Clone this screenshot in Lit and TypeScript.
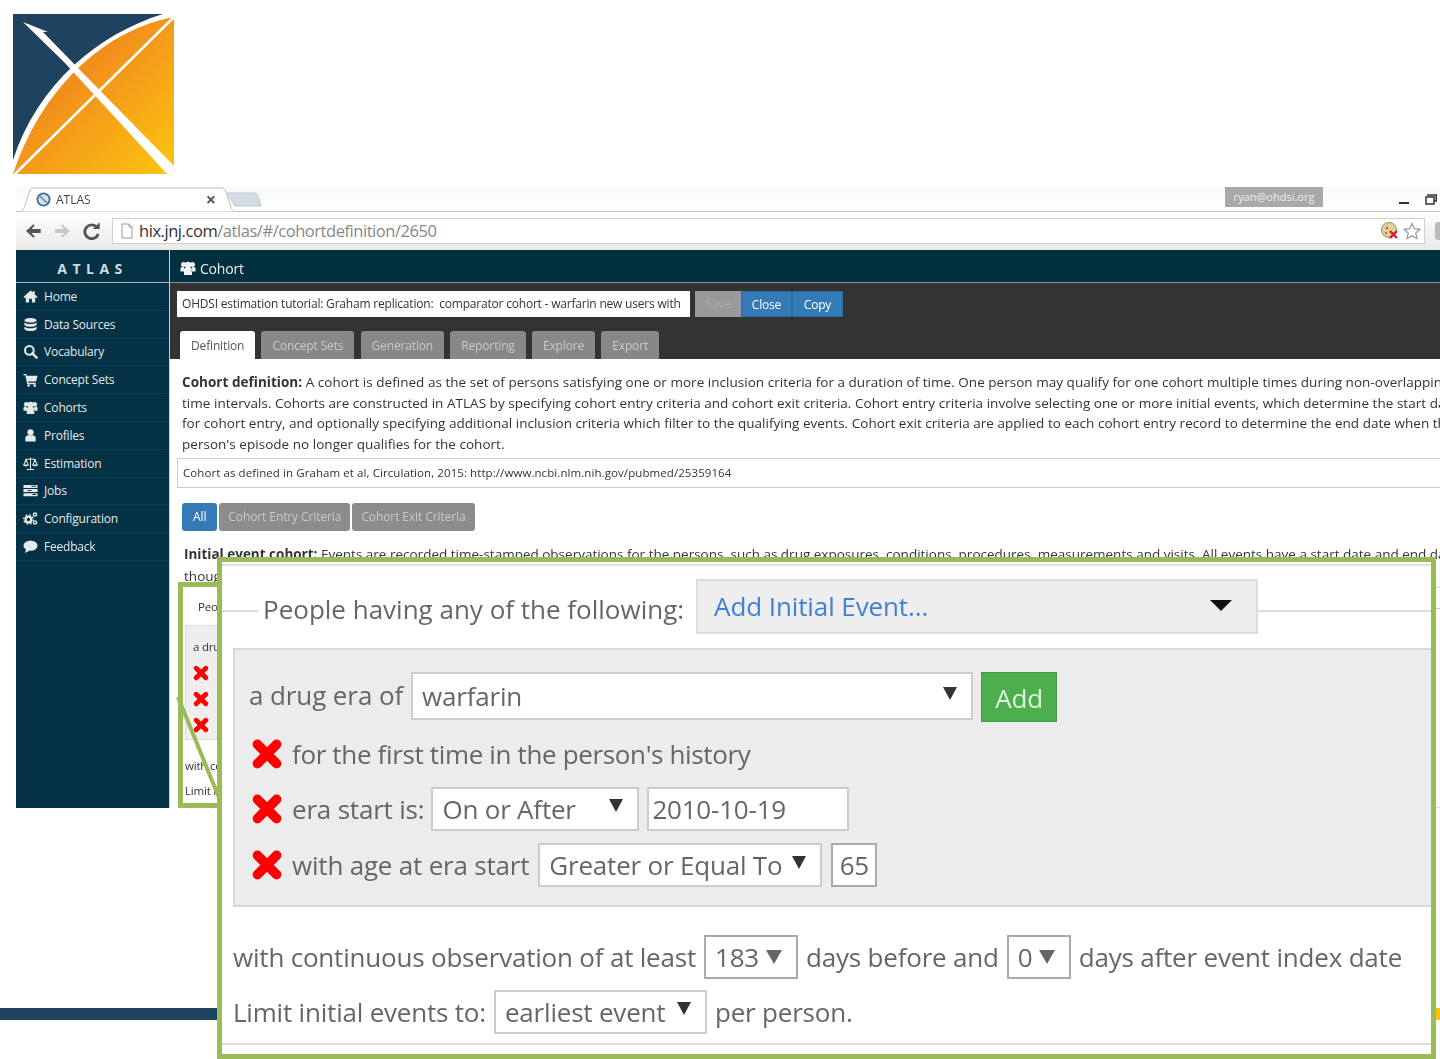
import { css, html, svg, LitElement } from "lit";
import { customElement } from "lit/decorators.js";

const icons = {
    home: svg`<path d="M8 1.500.5 8.500l1.300 1.300L3 8.700v5.800h3.500v-4h3v4H13V8.700l1.200 1.100 1.300-1.300-3-2.800V2.500h-2v1z"/>`,
    db: svg`<path d="M1.500 3.500C1.500 2 5 1 8 1s6.500 1 6.500 2.500S11 6 8 6 1.500 5 1.500 3.500zM1.500 5.500C3 7 5.500 7.500 8 7.500s5-.5 6.500-2V8c0 1.500-3.500 2.500-6.500 2.500S1.500 9.500 1.500 8zM1.500 10C3 11.500 5.500 12 8 12s5-.5 6.500-2v2.500C14.500 14 11 15 8 15s-6.500-1-6.500-2.500z"/>`,
    search: svg`<circle cx="6.800" cy="6.800" r="4.600" fill="none" stroke="currentColor" stroke-width="2.200"/><path d="m10 10 4.500 4.500" stroke="currentColor" stroke-width="2.600" stroke-linecap="round"/>`,
    cart: svg`<path d="M.5 2H3.500l.5 2h11.500l-1.500 6H5.500l.3 1.500H13.500V13H4.500L2.500 3.500H.5z"/><circle cx="6" cy="14.500" r="1.400"/><circle cx="12.500" cy="14.500" r="1.400"/>`,
    users: svg`<circle cx="3.500" cy="4.500" r="2.500"/><circle cx="12.500" cy="4.500" r="2.500"/><circle cx="8" cy="5" r="3.200"/><path d="M.5 11.500V8.500C.5 7.500 1.500 7 3 7l1 .5.5 4zM15.500 11.500V8.500C15.500 7.500 14.500 7 13 7l-1 .5-.5 4zM4 15V10c0-1.500 1-2.500 2-2.500h4c1 0 2 1 2 2.500v5z"/>`,
    user: svg`<circle cx="8" cy="4.500" r="3.300"/><path d="M2.500 14.500V11c0-2 1.500-3.200 3-3.200h5c1.500 0 3 1.200 3 3.200v3.500z"/>`,
    scale: svg`<path d="M8 1.500V14M4 14.500h8M2.500 3.500h11M3.200 4 .8 9.500h4.800zM12.800 4l-2.400 5.500h4.800z" fill="none" stroke="currentColor" stroke-width="1.100"/><path d="M.8 9.500c.5 2 4.300 2 4.800 0zM10.400 9.500c.5 2 4.300 2 4.800 0z"/>`,
    jobs: svg`<path d="M.5 2h15v3.200H.5zM.5 6.400h15v3.200H.5zM.5 10.800h15V14H.5z"/><path d="M9 3h5v1H9zM5 7.500h4v1H5zM10 11.800h4v1h-4z" fill="#053144"/>`,
    cogs: svg`<circle cx="5.800" cy="9" r="3" fill="none" stroke="currentColor" stroke-width="2.400"/><circle cx="5.800" cy="9" r="5" fill="none" stroke="currentColor" stroke-width="1.400" stroke-dasharray="2 1.930"/><circle cx="12.800" cy="3.800" r="1.700" fill="none" stroke="currentColor" stroke-width="1.500"/><circle cx="12.800" cy="12.200" r="1.700" fill="none" stroke="currentColor" stroke-width="1.500"/>`,
    comment: svg`<ellipse cx="8" cy="7" rx="7.500" ry="5.500"/><path d="M3.500 10.500 2 15l5-2.500z"/>`,
};

const menu: [keyof typeof icons, string][] = [
    ["home", "Home"],
    ["db", "Data Sources"],
    ["search", "Vocabulary"],
    ["cart", "Concept Sets"],
    ["users", "Cohorts"],
    ["user", "Profiles"],
    ["scale", "Estimation"],
    ["jobs", "Jobs"],
    ["cogs", "Configuration"],
    ["comment", "Feedback"],
];

const tabs = ["Concept Sets", "Generation", "Reporting", "Explore", "Export"];

const icon = (name: keyof typeof icons) =>
    html`<svg class="icon" viewBox="0 0 16 16" fill="currentColor">${icons[name]}</svg>`;

const cross = (cls: string) =>
    html`<svg class=${cls} viewBox="0 0 30 30"><path d="M6 6 24 24M24 6 6 24" stroke="#f00" stroke-width="9" stroke-linecap="round"/></svg>`;

@customElement("app-root")
export class AppRoot extends LitElement {

    static styles = css`
        :host {
            display: block;
            position: relative;
            width: 1440px;
            height: 1059px;
            overflow: hidden;
            background: #fff;
            font-family: "Open Sans", "Noto Sans", sans-serif;
            color: #333;
        }

        .logo {
            display: block;
            width: 163px;
            height: 162px;
            margin: 14px 0 0 13px;
        }

        .window {
            margin: 11px 0 0 16px;
            filter: blur(0.35px);
        }

        /* browser chrome */
        .tabstrip {
            position: relative;
            display: flex;
            height: 25px;
            background: linear-gradient(#fafafa, #fff);
            border-bottom: 1px solid #c4c4c4;
            box-sizing: border-box;
        }

        .tabshape {
            position: absolute;
            left: 0;
            top: 0;
            width: 250px;
            height: 25px;
        }

        .tabtitle {
            position: relative;
            display: flex;
            align-items: center;
            width: 204px;
            height: 24px;
            padding-left: 20px;
            box-sizing: border-box;
            font-size: 12px;
            color: #444;
        }

        .favicon {
            width: 15px;
            height: 15px;
            margin-right: 5px;
        }

        .tabclose {
            margin-left: auto;
            margin-right: 4px;
            font-size: 18px;
            font-weight: 700;
            color: #555;
        }

        .account {
            margin-left: auto;
            width: 98px;
            height: 20px;
            line-height: 19px;
            text-align: center;
            background: #a9a9a9;
            color: #eee;
            font-size: 11px;
        }

        .winbtns {
            display: flex;
            align-items: center;
            gap: 16px;
            margin: 0 3px 0 76px;
        }

        .min {
            width: 10px;
            height: 2px;
            margin-top: 7px;
            background: #333;
        }

        .max {
            width: 12px;
            height: 11px;
        }

        .toolbar {
            display: flex;
            align-items: center;
            height: 38px;
            padding-left: 8px;
            background: linear-gradient(#fff, #e9e9e9);
        }

        .nav {
            width: 18px;
            height: 18px;
            margin-right: 12px;
        }

        .omnibox {
            display: flex;
            align-items: center;
            flex: none;
            width: 1313px;
            height: 26px;
            margin-left: -1px;
            padding: 0 3px 1px 7px;
            box-sizing: border-box;
            background: #fff;
            border: 1px solid #cfcfcf;
            font-size: 16.500px;
            letter-spacing: -0.45px;
            color: #888;
        }

        .omnibox b {
            font-weight: 400;
            color: #333;
        }

        .doc {
            width: 14px;
            height: 16px;
            margin-right: 5px;
        }

        .omni-right {
            margin-left: auto;
            display: flex;
            align-items: center;
            gap: 4px;
        }

        .omni-right svg {
            width: 18px;
            height: 18px;
        }

        .ext {
            flex: none;
            width: 5px;
            height: 18px;
            margin-left: 10px;
            border-radius: 3px 0 0 3px;
            background: #bbb;
        }

        /* ATLAS app */
        .app {
            display: flex;
            height: 558px;
            overflow: hidden;
        }

        .side {
            flex: none;
            width: 153px;
            background: #053144;
            border-right: 1px solid #c8d0d4;
            color: #e4eaec;
            font-size: 12px;
        }

        .brand {
            height: 33px;
            line-height: 38px;
            box-sizing: border-box;
            text-align: center;
            font-size: 14px;
            font-weight: 700;
            letter-spacing: 5.500px;
            color: #d3dbde;
            border-bottom: 1px solid #a8b5bb;
        }

        .item {
            display: flex;
            align-items: center;
            height: 27.800px;
            padding-left: 7px;
            box-sizing: border-box;
            border-bottom: 1px solid #0c3e52;
            letter-spacing: -0.2px;
        }

        .icon {
            flex: none;
            width: 15px;
            height: 15px;
            margin-right: 6px;
        }

        .main {
            flex: 1;
            min-width: 0;
        }

        .head {
            display: flex;
            align-items: center;
            height: 33px;
            padding: 4px 0 0 10px;
            box-sizing: border-box;
            background: #02303f;
            border-bottom: 1px solid #7b96a0;
            color: #eef2f3;
            font-size: 14px;
            letter-spacing: -0.2px;
        }

        .head .icon {
            width: 16px;
            height: 16px;
            margin-right: 4px;
        }

        .bar {
            height: 76px;
            padding: 8px 0 0 7px;
            box-sizing: border-box;
            background: #333;
            font-size: 12px;
        }

        .names {
            display: flex;
            align-items: center;
        }

        .name {
            width: 513px;
            height: 26px;
            line-height: 26px;
            padding-left: 5px;
            box-sizing: border-box;
            margin-right: 5px;
            background: #fff;
            white-space: nowrap;
            overflow: hidden;
            letter-spacing: -0.2px;
        }

        .btn {
            height: 26px;
            line-height: 26px;
            text-align: center;
            color: #fff;
            letter-spacing: -0.2px;
        }

        .save {
            width: 46px;
            background: #999;
            color: #aaa;
        }

        .blue {
            width: 51px;
            background: #337ab7;
            border: 1px solid #2e6da4;
            box-sizing: border-box;
        }

        .tabs {
            display: flex;
            gap: 6.200px;
            margin: 14px 0 0 3px;
        }

        .tab {
            height: 28px;
            line-height: 29px;
            padding: 0 11px;
            border-radius: 3px 3px 0 0;
            background: #888;
            color: #c9c9c9;
            letter-spacing: -0.15px;
        }

        .tab.on {
            background: #fff;
            color: #555;
        }

        .body {
            padding: 13px 0 0 12px;
            font-size: 13.500px;
            line-height: 20.500px;
            white-space: nowrap;
            letter-spacing: 0.03px;
        }

        .note {
            height: 30px;
            line-height: 28px;
            margin: 4px 0 15px -5px;
            padding-left: 5px;
            box-sizing: border-box;
            border: 1px solid #ccc;
            border-right: 0;
            font-size: 11.500px;
            letter-spacing: 0.08px;
        }

        .filters {
            display: flex;
            gap: 2px;
            font-size: 12px;
        }

        .filter {
            height: 28px;
            line-height: 28px;
            padding: 0 9px;
            border-radius: 3px;
            background: #8c8c8c;
            color: #c9c9c9;
            letter-spacing: -0.1px;
        }

        .filter.on {
            background: #337ab7;
            color: #fff;
            padding: 0 11px;
        }

        .initial {
            margin: 13px 0 0 2px;
            letter-spacing: 0;
        }

        .initial-2 {
            margin: 1px 0 0 2px;
        }

        .mini {
            font-size: 11.500px;
            letter-spacing: -0.2px;
        }

        .mini-legend {
            height: 20px;
            margin: 11px 0 0 16px;
        }

        .mini-box {
            width: 1100px;
            height: 115px;
            margin: 8px 0 0 3px;
            padding: 13px 0 0 7px;
            box-sizing: border-box;
            line-height: 15.500px;
            background: #eee;
            border: 1px solid #ddd;
        }

        .mini-x {
            display: block;
            width: 16px;
            height: 16px;
            margin-top: 10px;
        }

        .mini-foot {
            margin: 13px 0 0 3px;
            line-height: 25px;
        }

        .strip {
            display: flex;
            height: 12px;
            margin-top: 200px;
        }

        .strip-navy {
            flex: 1;
            background: #1f4260;
        }

        .strip-gold {
            width: 8px;
            background: #fdc010;
        }

        /* zoom callout, it lies over the screenshot */
        .edge {
            position: absolute;
            left: 1436px;
            top: 587px;
            width: 4px;
            height: 221px;
            box-sizing: border-box;
            border-top: 1px solid #ddd;
            border-bottom: 1px solid #ddd;
        }

        .edge div {
            height: 1px;
            margin-top: 20px;
            background: #ccc;
        }

        .frame-small {
            position: absolute;
            left: 178px;
            top: 582px;
            width: 1200px;
            height: 226px;
            box-sizing: border-box;
            border: 5px solid #9bbb59;
        }

        .link {
            position: absolute;
            left: 176px;
            top: 694px;
            width: 50px;
            height: 114px;
        }

        .zoom {
            position: absolute;
            left: 217px;
            top: 557px;
            width: 1219px;
            height: 502px;
            box-sizing: border-box;
            padding-top: 2px;
            border: 5px solid #9bbb59;
            background: #fff;
            font-size: 26px;
            color: #666;
            white-space: nowrap;
            letter-spacing: -0.2px;
        }

        .zoom-inner {
            height: 481px;
            border-top: 2px solid #e2e2e2;
            border-bottom: 2px solid #ddd;
            box-sizing: border-box;
            filter: blur(0.45px);
        }

        .legend {
            display: flex;
            align-items: center;
            height: 55px;
            margin-top: 13px;
        }

        .legend-text {
            padding-top: 4px;
            letter-spacing: 0;
        }

        .rule {
            height: 2px;
            margin-top: 8px;
            background: #ddd;
        }

        .rule-left {
            width: 37px;
            margin-right: 4px;
        }

        .rule-right {
            flex: 1;
        }

        .adder {
            display: flex;
            align-items: center;
            justify-content: space-between;
            width: 562px;
            height: 55px;
            margin-left: 12px;
            padding: 0 24px 2px 16px;
            box-sizing: border-box;
            background: #eee;
            border: 2px solid #ddd;
            color: #3f7fd6;
            letter-spacing: -0.1px;
        }

        .adder i {
            width: 0;
            height: 0;
            border: 11px solid transparent;
            border-top: 11px solid #111;
            border-bottom: 0;
        }

        .group {
            display: flex;
            flex-direction: column;
            gap: 12px;
            height: 259px;
            margin: 14px 0 0 11px;
            padding: 22px 0 0 14px;
            box-sizing: border-box;
            background: #ececec;
            border-top: 2px solid #d8d8d8;
            border-bottom: 2px solid #d8d8d8;
            border-left: 2px solid #d8d8d8;
        }

        .row {
            display: flex;
            align-items: center;
        }

        .row-drug {
            height: 50px;
        }

        .drug-label {
            padding-bottom: 4px;
            letter-spacing: -0.1px;
        }

        .row-first {
            height: 40px;
            letter-spacing: -0.35px;
        }

        .row-start {
            height: 45px;
        }

        .row-age {
            height: 44px;
        }

        .x {
            flex: none;
            width: 32px;
            height: 32px;
            margin: 0 9px 0 2px;
        }

        .field {
            display: flex;
            align-items: center;
            justify-content: space-between;
            height: 44px;
            padding: 0 14px 0 9px;
            box-sizing: border-box;
            background: #fff;
            border: 2px solid #ccc;
            color: #666;
        }

        .field i {
            flex: none;
            width: 0;
            height: 0;
            margin-bottom: 6px;
            border: 7px solid transparent;
            border-top: 13px solid #333;
            border-bottom: 0;
        }

        .drug {
            width: 562px;
            height: 48px;
            margin: 0 0 2px 8px;
        }

        .add {
            width: 76px;
            height: 50px;
            line-height: 50px;
            margin-left: 8px;
            text-align: center;
            background: #4cae4c;
            border: 1px solid #449d44;
            box-sizing: border-box;
            color: #dff3df;
        }

        .op {
            width: 208px;
            margin-left: 7px;
        }

        .date {
            width: 202px;
            margin-left: 8px;
            padding: 0 3px;
        }

        .gte {
            width: 284px;
            margin-left: 9px;
        }

        .num {
            width: 46px;
            margin-left: 9px;
            border-color: #aaa;
            justify-content: center;
            padding: 0;
        }

        .line {
            display: flex;
            align-items: center;
            height: 44px;
            margin-left: 11px;
        }

        .line-obs {
            margin-top: 28px;
        }

        .line-limit {
            margin-top: 10px;
            height: 45px;
        }

        .line .field {
            margin: 0 8px;
        }

        .line .field i {
            margin-bottom: 0;
            border-width: 14px 8px 0;
            border-style: solid;
            border-color: #666 transparent transparent;
        }

        .line .field.earliest i {
            border-width: 13px 7px 0;
            border-color: #333 transparent transparent;
            margin-bottom: 6px;
        }

        .before {
            width: 94px;
            border-color: #aaa;
        }

        .after {
            width: 64px;
            border-color: #aaa;
        }

        .earliest {
            width: 213px;
        }
    `;

    protected render() {
        return html`
            <svg class="logo" viewBox="0 0 163 162">
                <defs>
                    <linearGradient id="gold" x1="0.2" y1="0.2" x2="1" y2="1">
                        <stop offset="0.25" stop-color="#f28f1c"/>
                        <stop offset="1" stop-color="#fcc60f"/>
                    </linearGradient>
                </defs>
                <path d="M0 0H150C85 20 25 70 0 146Z" fill="#1f4260"/>
                <path d="M161 3C95 15 30 70 0 160H161Z" fill="url(#gold)"/>
                <path d="M161 3 2 160" stroke="#fff" stroke-width="2.500"/>
                <path d="M10 8 35 18 30 18 65 54 162 153V161H155L52 49Z" fill="#fff"/>
            </svg>

            <div class="window">
                <div class="tabstrip">
                    <svg class="tabshape" viewBox="0 0 250 25">
                        <path d="M0 25C8 25 8 22 11 12L14 3C15 1 16 1 18 1H205C208 1 209 2 210 5L215 20C216 24 218 25 222 25Z" fill="#fff" stroke="#bdbdbd"/>
                        <path d="M211 6H238C241 6 242 8 243 12L245 19H219Z" fill="#d3dbe4" stroke="#c4c9cf"/>
                    </svg>
                    <div class="tabtitle">
                        <svg class="favicon" viewBox="0 0 16 16">
                            <circle cx="8" cy="8" r="6.500" fill="#d7e3ee" stroke="#41719c" stroke-width="2"/>
                            <path d="M4 4 12 12" stroke="#7d9cb8" stroke-width="2"/>
                        </svg>
                        ATLAS
                        <span class="tabclose">×</span>
                    </div>
                    <div class="account">ryan@ohdsi.org</div>
                    <div class="winbtns">
                        <div class="min"></div>
                        <svg class="max" viewBox="0 0 12 11" fill="none" stroke="#333" stroke-width="1.500">
                            <path d="M3 2V1H11.250V7H9"/><path d="M1 3H9V10H1Z"/>
                        </svg>
                    </div>
                </div>
                <div class="toolbar">
                    <svg class="nav" viewBox="0 0 18 18"><path d="M17 7H7.500L11 3.500 9.500 2 2 9l7.500 7 1.500-1.500L7.500 11H17Z" fill="#555"/></svg>
                    <svg class="nav" viewBox="0 0 18 18"><path d="M1 7H10.500L7 3.500 8.500 2 16 9l-7.500 7L7 14.500 10.500 11H1Z" fill="#c6c6c6"/></svg>
                    <svg class="nav" viewBox="0 0 18 18"><path d="M14 5A7 7 0 1 0 15.500 12" fill="none" stroke="#555" stroke-width="3"/><path d="M10 7H17V0Z" fill="#555"/></svg>
                    <div class="omnibox">
                        <svg class="doc" viewBox="0 0 14 16"><path d="M2 1H9L12 4V15H2Z" fill="#fff" stroke="#999"/><path d="M9 1V4H12" fill="none" stroke="#999"/></svg>
                        <span><b>hix.jnj.com</b>/atlas/#/cohortdefinition/2650</span>
                        <div class="omni-right">
                            <svg viewBox="0 0 18 18">
                                <circle cx="8" cy="8" r="7.500" fill="#e4cf9c" stroke="#a88d55"/>
                                <circle cx="6" cy="6" r="1.200" fill="#8a6d3b"/><circle cx="5" cy="11" r="1" fill="#8a6d3b"/>
                                <path d="M9 9 16 16M16 9 9 16" stroke="#d3202a" stroke-width="2.400"/>
                            </svg>
                            <svg viewBox="0 0 18 18"><path d="M9 1.500 11.300 6.700 17 7.300 12.700 11 14 16.500 9 13.700 4 16.500 5.300 11 1 7.300 6.700 6.700Z" fill="#fff" stroke="#999" stroke-width="1.200"/></svg>
                        </div>
                    </div>
                    <div class="ext"></div>
                </div>
                <div class="app">
                    <nav class="side">
                        <div class="brand">ATLAS</div>
                        ${menu.map(([name, label]) => html`<div class="item">${icon(name)}${label}</div>`)}
                    </nav>
                    <div class="main">
                        <div class="head">${icon("users")}Cohort</div>
                        <div class="bar">
                            <div class="names">
                                <div class="name">OHDSI estimation tutorial: Graham replication:&nbsp; comparator cohort - warfarin new users with</div>
                                <div class="btn save">Save</div>
                                <div class="btn blue">Close</div>
                                <div class="btn blue">Copy</div>
                            </div>
                            <div class="tabs">
                                <div class="tab on">Definition</div>
                                ${tabs.map((t) => html`<div class="tab">${t}</div>`)}
                            </div>
                        </div>
                        <div class="body">
                            <div><b>Cohort definition:</b> A cohort is defined as the set of persons satisfying one or more inclusion criteria for a duration of time. One person may qualify for one cohort multiple times during non-overlapping</div>
                            <div>time intervals. Cohorts are constructed in ATLAS by specifying cohort entry criteria and cohort exit criteria. Cohort entry criteria involve selecting one or more initial events, which determine the start date</div>
                            <div>for cohort entry, and optionally specifying additional inclusion criteria which filter to the qualifying events. Cohort exit criteria are applied to each cohort entry record to determine the end date when the</div>
                            <div>person's episode no longer qualifies for the cohort.</div>
                            <div class="note">Cohort as defined in Graham et al, Circulation, 2015: http://www.ncbi.nlm.nih.gov/pubmed/25359164</div>
                            <div class="filters">
                                <div class="filter on">All</div>
                                <div class="filter">Cohort Entry Criteria</div>
                                <div class="filter">Cohort Exit Criteria</div>
                            </div>
                            <div class="initial"><b>Initial event cohort:</b> Events are recorded time-stamped observations for the persons, such as drug exposures, conditions, procedures, measurements and visits. All events have a start date and end date,</div>
                            <div class="initial-2">though</div>
                            <div class="mini">
                                <div class="mini-legend">People</div>
                                <div class="mini-box">
                                    a drug
                                    ${cross("mini-x")}${cross("mini-x")}${cross("mini-x")}
                                </div>
                                <div class="mini-foot">with continuous<br>Limit initial</div>
                            </div>
                        </div>
                    </div>
                </div>
            </div>

            <div class="strip"><div class="strip-navy"></div><div class="strip-gold"></div></div>

            <div class="edge"><div></div></div>
            <div class="frame-small"></div>
            <svg class="link" viewBox="0 0 50 114"><path d="M2 3 46 111" stroke="#9bbb59" stroke-width="4"/></svg>

            <div class="zoom">
                <div class="zoom-inner">
                    <div class="legend">
                        <div class="rule rule-left"></div>
                        <span class="legend-text">People having any of the following:</span>
                        <div class="adder">Add Initial Event...<i></i></div>
                        <div class="rule rule-right"></div>
                    </div>
                    <div class="group">
                        <div class="row row-drug">
                            <span class="drug-label">a drug era of</span>
                            <div class="field drug">warfarin<i></i></div>
                            <div class="add">Add</div>
                        </div>
                        <div class="row row-first">${cross("x")}for the first time in the person's history</div>
                        <div class="row row-start">
                            ${cross("x")}era start is:
                            <div class="field op">On or After<i></i></div>
                            <div class="field date">2010-10-19</div>
                        </div>
                        <div class="row row-age">
                            ${cross("x")}with age at era start
                            <div class="field gte">Greater or Equal To<i></i></div>
                            <div class="field num">65</div>
                        </div>
                    </div>
                    <div class="line line-obs">
                        with continuous observation of at least
                        <div class="field before">183<i></i></div>
                        days before and
                        <div class="field after">0<i></i></div>
                        days after event index date
                    </div>
                    <div class="line line-limit">
                        Limit initial events to:
                        <div class="field earliest">earliest event<i></i></div>
                        per person.
                    </div>
                </div>
            </div>
        `;
    }
}
